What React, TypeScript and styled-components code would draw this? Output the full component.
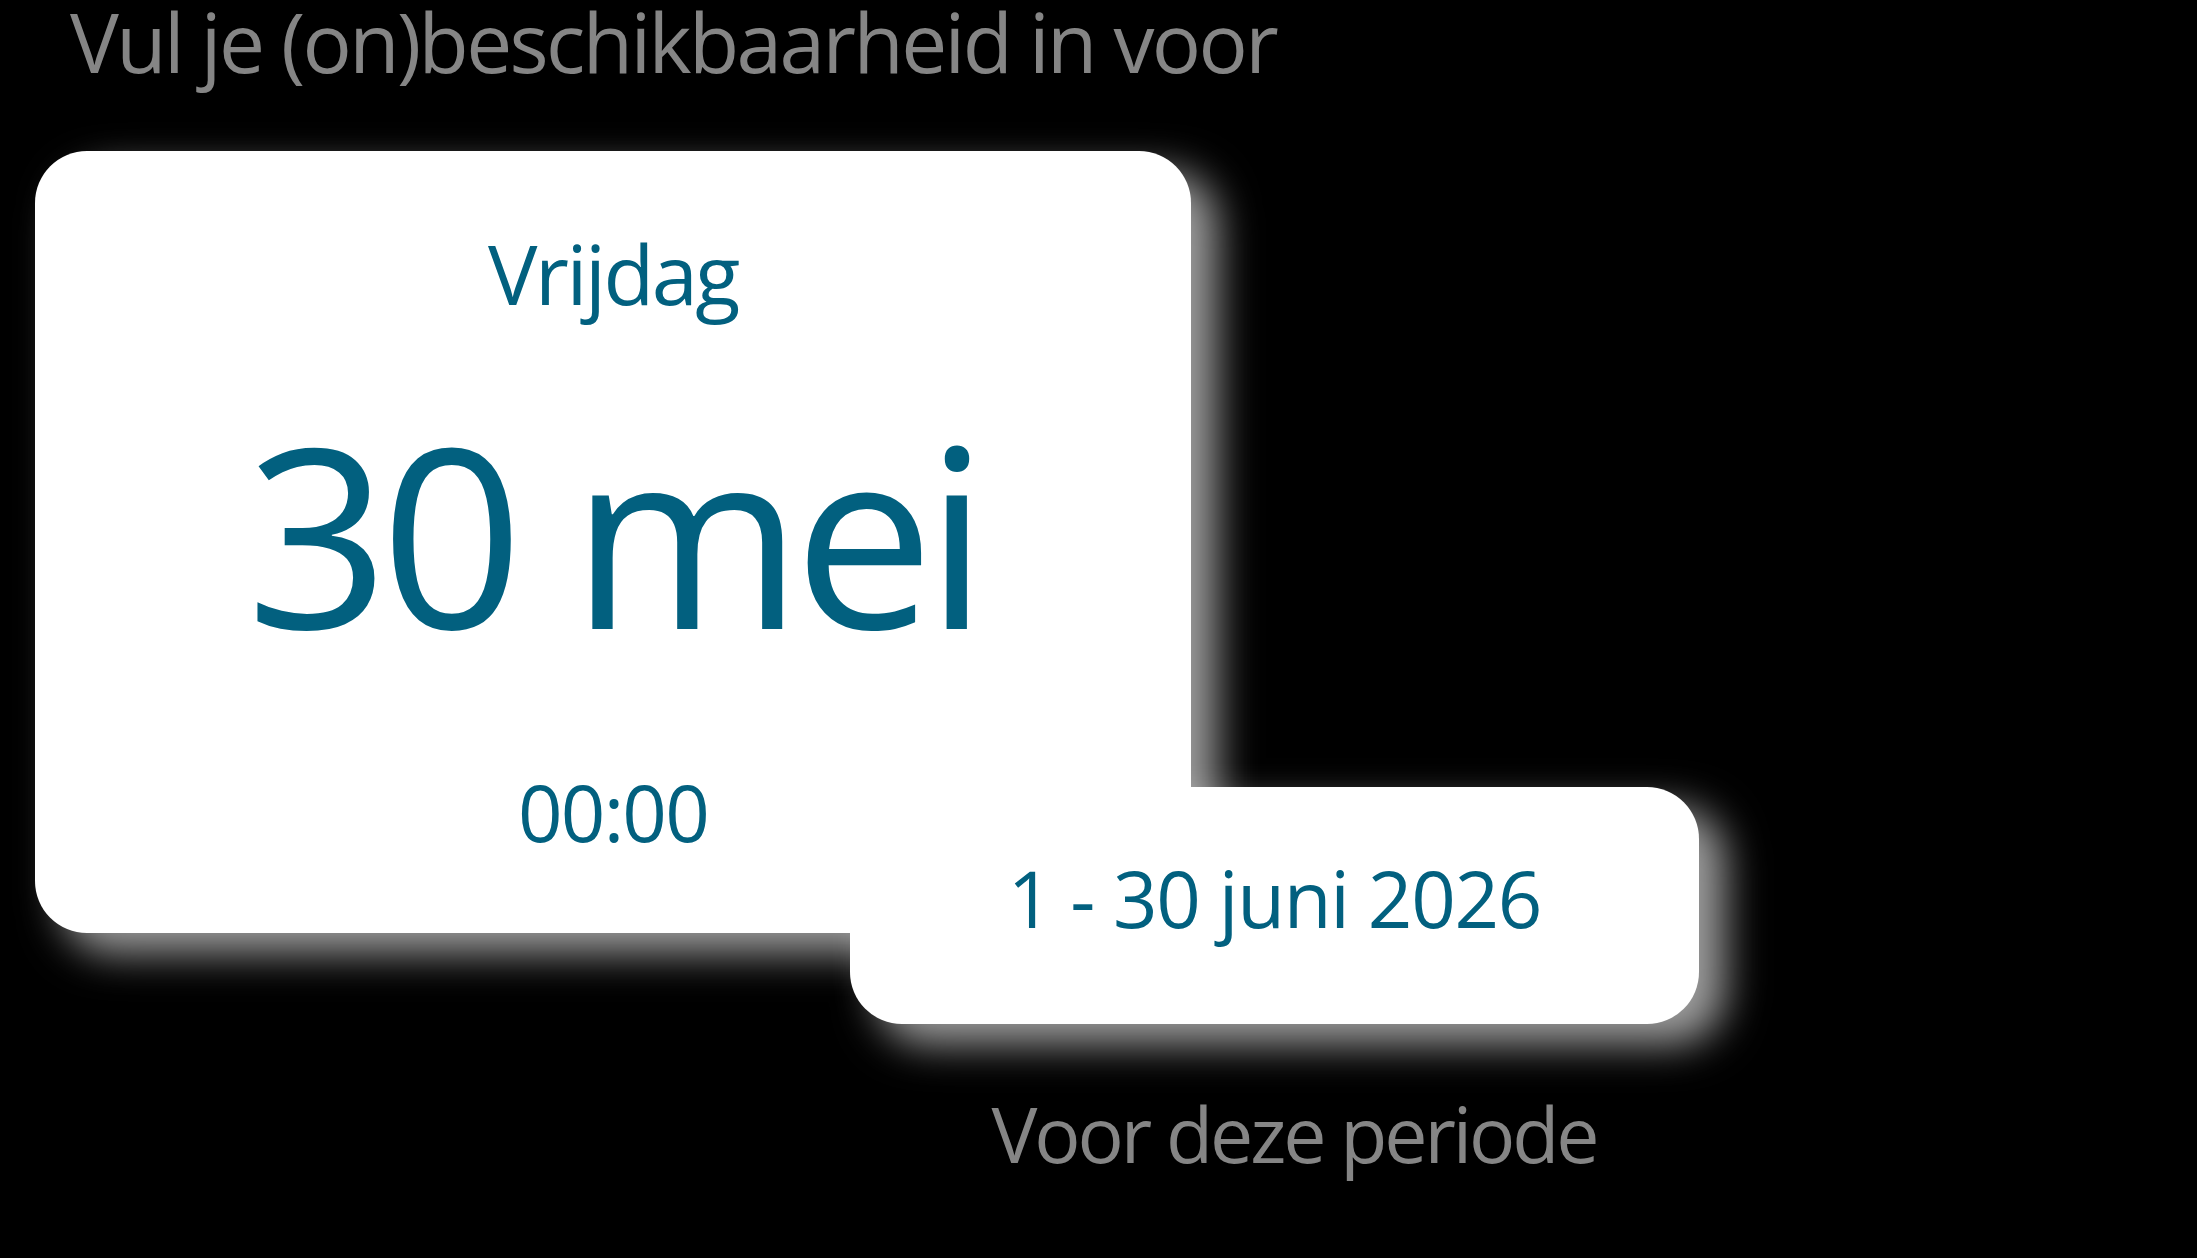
import styled, { createGlobalStyle } from "styled-components";

const GlobalStyle = createGlobalStyle`
  html, body {
    margin: 0;
    padding: 0;
    background: #000000;
  }
  body {
    font-family: "Open Sans", "Noto Sans", sans-serif;
    overflow: hidden;
  }
`;

const Page = styled.main`
  min-height: 100vh;
  background: #000000;
  display: flex;
  flex-direction: column;
`;

const Heading = styled.h1`
  margin: 0;
  padding-left: 70px;
  font-size: 82px;
  font-weight: 400;
  line-height: 82px;
  letter-spacing: -2.6px;
  color: #858585;
  white-space: nowrap;
`;

const Stack = styled.section`
  display: flex;
  flex-direction: column;
  align-items: flex-start;
  margin-top: 69px;
  padding-left: 35px;
`;

const Card = styled.div`
  background: #ffffff;
  border-radius: 52px;
  box-shadow: 26px 20px 40px rgba(255, 255, 255, 0.62);
  color: #02607f;
`;

const DayCard = styled(Card)`
  width: 1156px;
  height: 782px;
  box-sizing: border-box;
  padding-top: 80px;
  display: flex;
  flex-direction: column;
  align-items: center;
`;

// one line of card text: size, gap above it and tracking vary per line
const Label = styled.div<{ $size: number; $gap?: number; $track?: number }>`
  font-size: ${(p) => p.$size}px;
  line-height: ${(p) => p.$size}px;
  margin-top: ${(p) => p.$gap ?? 0}px;
  letter-spacing: ${(p) => p.$track ?? 0}px;
  white-space: nowrap;
`;

const PeriodColumn = styled.div`
  display: flex;
  flex-direction: column;
  margin-left: 815px;
  margin-top: -146px;
  width: 849px;
`;

const PeriodCard = styled(Card)`
  height: 237px;
  display: flex;
  align-items: center;
  justify-content: center;
  padding-bottom: 16px;
  box-sizing: border-box;
  position: relative;
`;

const Caption = styled.p`
  margin: 71px 0 0;
  padding-left: 39px;
  text-align: center;
  font-size: 77px;
  line-height: 77px;
  letter-spacing: -3.1px;
  color: #858585;
  white-space: nowrap;
`;

export default function App() {
  return (
    <>
      <GlobalStyle />
      <Page>
        <Heading>Vul je (on)beschikbaarheid in voor</Heading>
        <Stack>
          <DayCard>
            <Label $size={83} $track={-2.5}>Vrijdag</Label>
            <Label $size={250} $gap={93} $track={-8.7}>30 mei</Label>
            <Label $size={78} $gap={116} $track={-1.8}>00:00</Label>
          </DayCard>
          <PeriodColumn>
            <PeriodCard>
              <Label $size={78} $track={-1.25}>1 - 30 juni 2026</Label>
            </PeriodCard>
            <Caption>Voor deze periode</Caption>
          </PeriodColumn>
        </Stack>
      </Page>
    </>
  );
}
